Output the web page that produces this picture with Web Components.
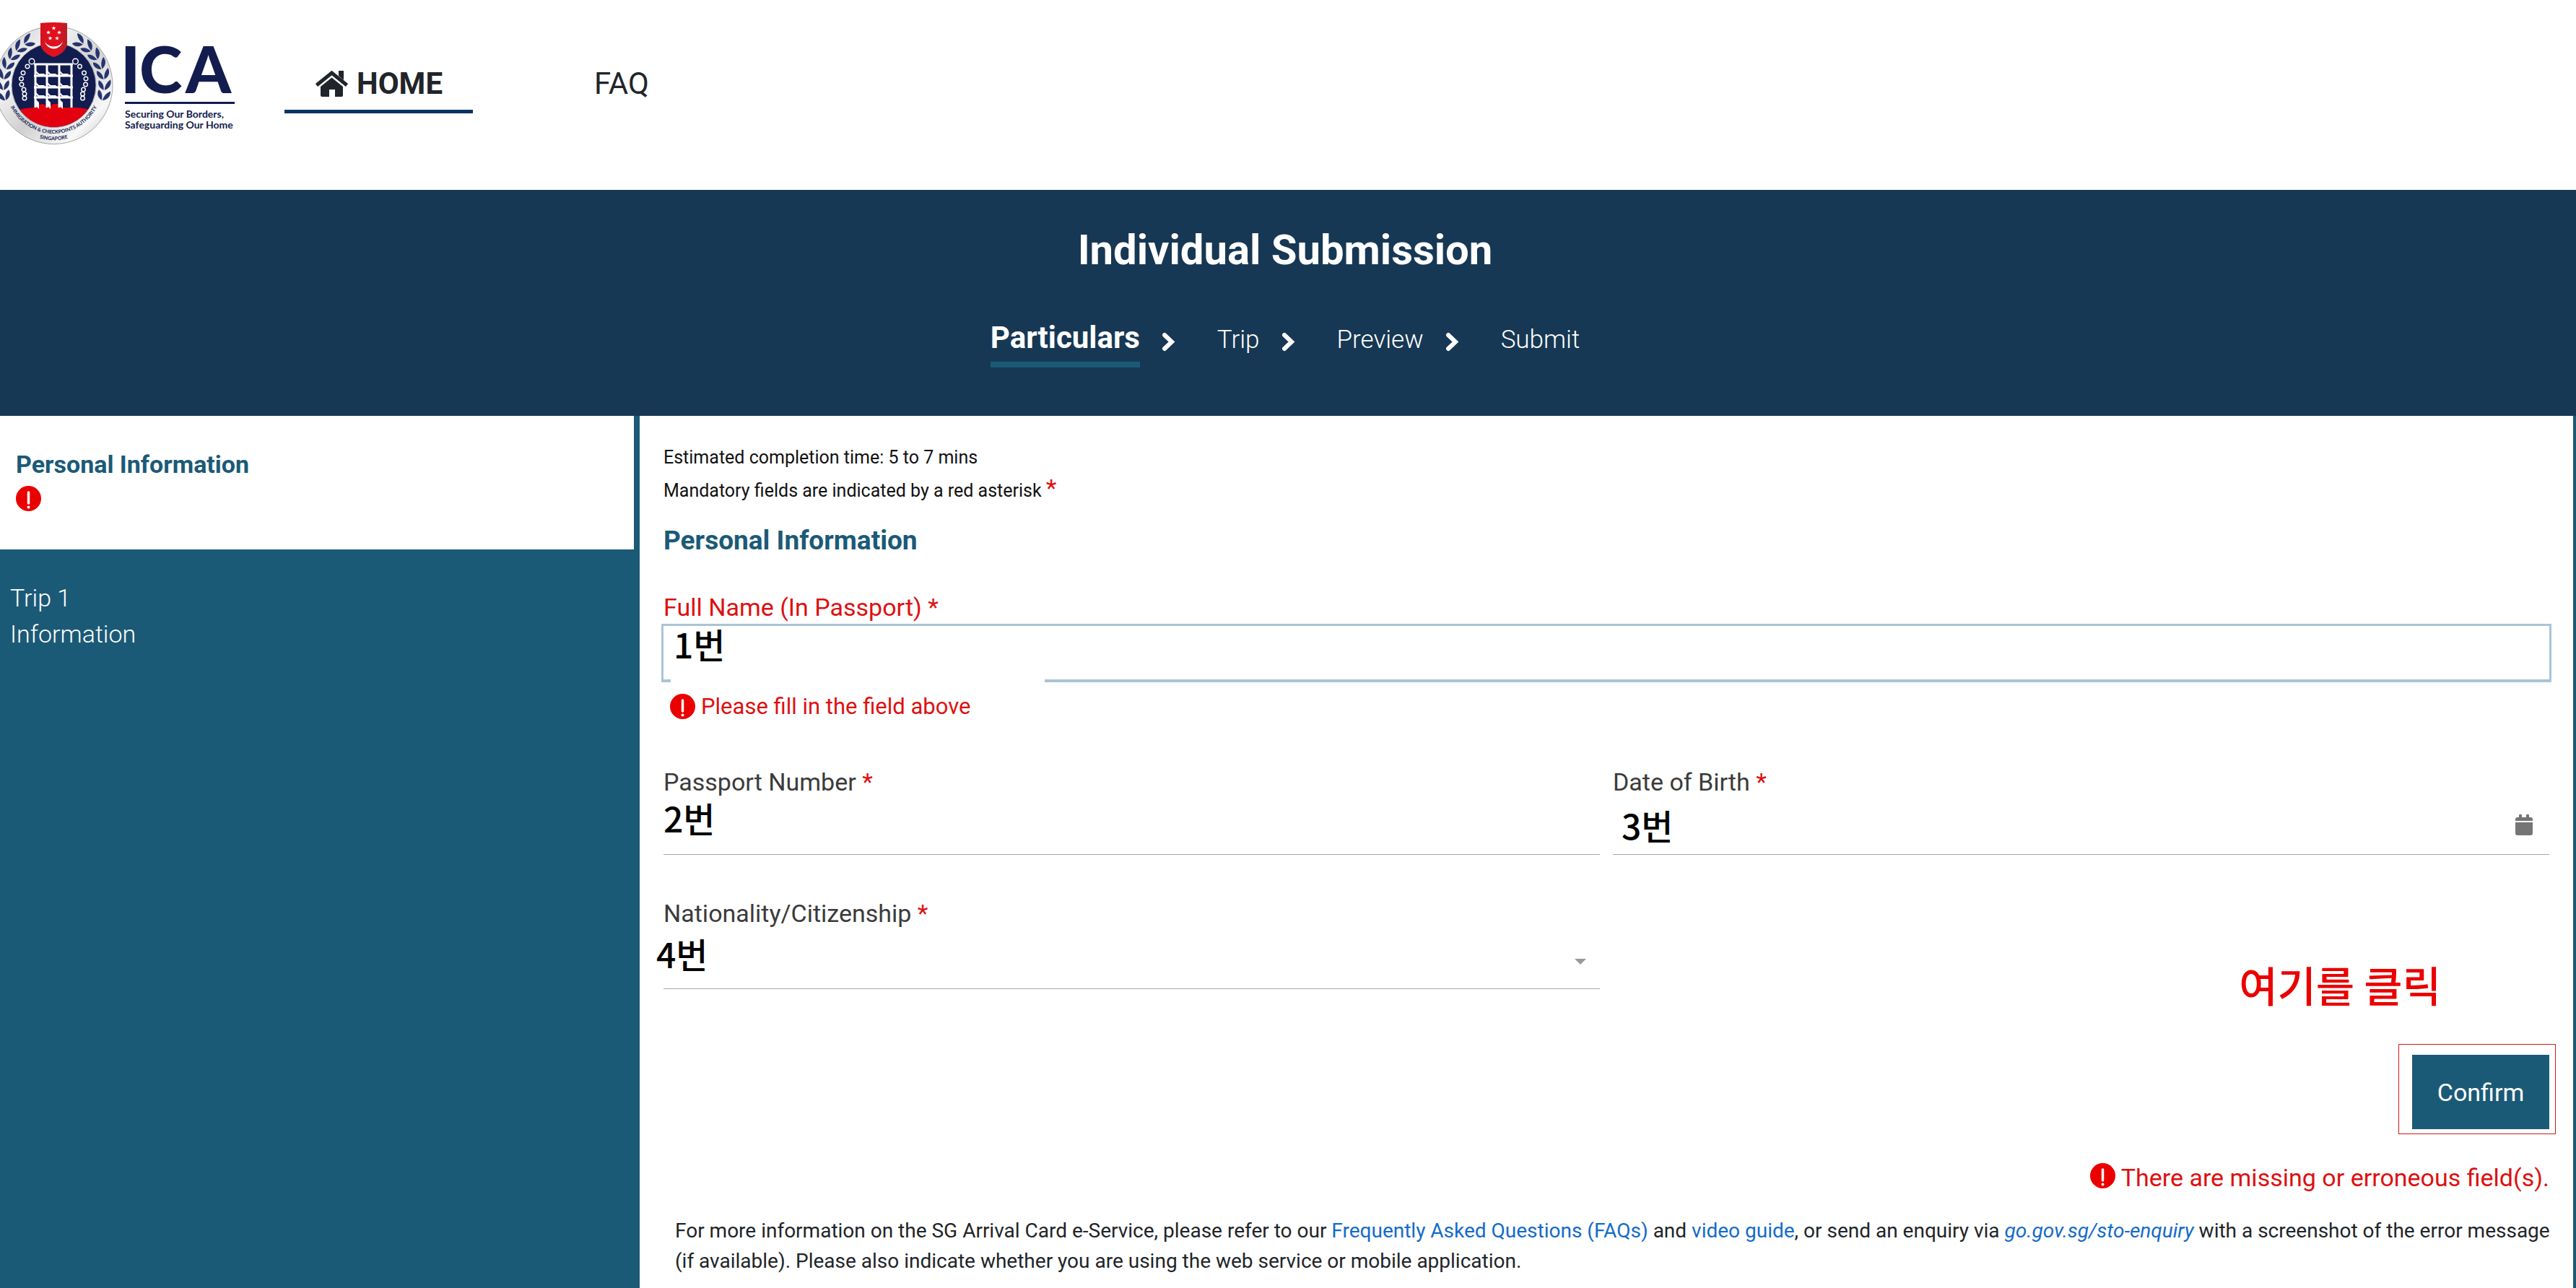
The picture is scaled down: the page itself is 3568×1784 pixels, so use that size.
<!DOCTYPE html>
<html lang="en">
<head>
<meta charset="utf-8">
<title>SG Arrival Card</title>
<style>
  body {
    margin: 0;
    min-height: 100vh;
    display: flex;
    flex-direction: column;
    background: #fff;
    color: #212529;
    font-family: Roboto, "Noto Sans CJK KR", sans-serif;
    font-size: 34px;
    --navy: #173854;
    --teal: #1b5a77;
    --red: #dd1111;
    --label-line: 46px;
  }
</style>
</head>
<body>
  <app-header></app-header>
  <step-banner title="Individual Submission" steps="Particulars,Trip,Preview,Submit"></step-banner>
  <app-shell>
    <side-nav slot="nav"></side-nav>
    <arrival-form></arrival-form>
  </app-shell>

<script>
const makeTemplate = (html) => {
  const template = document.createElement("template");
  template.innerHTML = html;
  return template;
};

class BaseElement extends HTMLElement {
  constructor() {
    super();
    this.attachShadow({ mode: "open" });
    this.shadowRoot.appendChild(this.constructor.template.content.cloneNode(true));
  }
}

/* ---------- logo ---------- */

// laurel branch on the right half of the ring, mirrored for the left
const laurel = () => {
  let out = "";
  for (let i = 0; i < 7; i++) {
    const deg = 15 - i * 12;
    const rad = (deg * Math.PI) / 180;
    const x = (70 * Math.cos(rad)).toFixed(1);
    const y = (70 * Math.sin(rad)).toFixed(1);
    out += `<g transform="translate(${x} ${y}) rotate(${deg})">
      <path d="M.6 3C.5-3 3-8 8-12C10-6 8 0 .6 3Z"/>
      <path d="M-.6 3C-.5-3-3-8-8-10C-10-5-7 1-.6 3Z"/></g>`;
  }
  return out;
};

const portcullis = () => {
  let out = "";
  for (const y of [89, 105, 121, 135]) out += `<path d="M47 ${y}H101" stroke-width="3"/>`;
  for (const x of [49, 65, 82, 99]) out += `<path d="M${x} 88V149" stroke-width="3"/>`;
  for (const y of [105, 121, 135]) {
    for (const x of [49, 65, 82]) {
      out += `<path d="M${x} ${y - 5}l5 5h10l-3-3h-7l-5-5z" fill="#fff" stroke="none"/>`;
    }
  }
  for (const x of [49, 65, 82]) out += `<path d="M${x} 137l5 5v9l-5-5z" fill="#fff" stroke="none"/>`;
  return out;
};

const chain = () =>
  [[44, 85], [38, 92], [32, 101], [29.5, 109], [30, 117], [33, 124], [34, 130], [34, 136]]
    .map(([x, y], i) => `<circle cx="${x}" cy="${y}" r="${i ? 2.8 : 3.8}"/>`).join("");

const star = (x, y) =>
  `<path transform="translate(${x} ${y})" d="M0-3L.8-.9 3-.9 1.2.5 1.8 2.6 0 1.3-1.8 2.6-1.2.5-3-.9-.8-.9Z"/>`;

class IcaLogo extends BaseElement {
  static template = makeTemplate(`
    <style>
      :host { display: block; }
      svg { display: block; }
      text { font-family: Lato, sans-serif; font-weight: 700; fill: #131c4e; }
    </style>
    <svg width="330" height="210" viewBox="0 0 330 210" role="img" aria-label="ICA">
      <defs>
        <linearGradient id="ring" x1="0" y1="0" x2="1" y2="1">
          <stop offset="0" stop-color="#c4c4c6"/><stop offset=".3" stop-color="#f4f4f4"/>
          <stop offset=".55" stop-color="#d0d0d2"/><stop offset=".8" stop-color="#f8f8f8"/>
          <stop offset="1" stop-color="#b5b5b8"/>
        </linearGradient>
        <linearGradient id="shield" x1="0" y1="0" x2="1" y2="0">
          <stop offset="0" stop-color="#d3131f"/><stop offset=".6" stop-color="#e5101e"/>
          <stop offset="1" stop-color="#b3202a"/>
        </linearGradient>
        <clipPath id="disc"><circle cx="74.5" cy="118" r="58"/></clipPath>
        <path id="arcOuter" d="M10.250 137A67 67 0 0 0 138.750 137"/>
        <path id="arcInner" d="M44 187.800A76 76 0 0 0 105 187.800"/>
      </defs>
      <circle cx="74.5" cy="118" r="81.500" fill="url(#ring)" stroke="#8e8e92" stroke-width=".8"/>
      <circle cx="74.5" cy="118" r="58.500" fill="#131c4e" stroke="#aeb0b8" stroke-width="1"/>
      <g fill="#27346e" transform="translate(74.500 118)">
        <g>${laurel()}</g><g transform="scale(-1 1)">${laurel()}</g>
      </g>
      <path clip-path="url(#disc)" fill="#e3000f" d="M14 156Q32 149 47 149L52 145 60 144 66 148 74 144 82 144 86 149 98 149Q118 148 136 156V180H14Z"/>
      <g fill="none" stroke="#fff">${portcullis()}</g>
      <g fill="none" stroke="#fff" stroke-width="1.400">
        ${chain()}<g transform="translate(148.500 0) scale(-1 1)">${chain()}</g>
      </g>
      <path d="M56 32Q74 30 93 32V60Q92 73 74.500 79Q57 73 56 60Z" fill="url(#shield)"/>
      <g fill="#fff">
        ${star(74.5, 39)}${star(67, 45)}${star(82, 45)}${star(69.500, 53)}${star(79, 53)}
        <path d="M62 55A12.500 12.500 0 0 0 87 55A12.500 9.500 0 0 1 62 55Z"/>
      </g>
      <text font-size="7"><textPath href="#arcOuter" startOffset="50%" text-anchor="middle">IMMIGRATION &amp; CHECKPOINTS AUTHORITY</textPath></text>
      <text font-size="7"><textPath href="#arcInner" startOffset="50%" text-anchor="middle">SINGAPORE</textPath></text>
      <text x="167 193 257" y="129" font-size="90" style="font-weight:900">ICA</text>
      <path d="M173 141H325V144H173Z" fill="#131c4e"/>
      <text x="173" y="163" font-size="14">Securing Our Borders,</text>
      <text x="173" y="178" font-size="14">Safeguarding Our Home</text>
    </svg>
  `);
}

/* ---------- header ---------- */

class AppHeader extends BaseElement {
  static template = makeTemplate(`
    <style>
      :host { display: block; }
      header {
        display: flex;
        align-items: flex-start;
        gap: 64px;
        padding-bottom: 53px;
      }
      nav {
        display: flex;
        gap: 126px;
        padding-top: 86px;
      }
      a {
        display: flex;
        align-items: center;
        gap: 11px;
        padding: 0 42px 6px;
        border-bottom: 5px solid transparent;
        color: #212529;
        font-size: 42px;
        line-height: 60px;
        text-decoration: none;
      }
      a.active {
        border-color: #073363;
        font-weight: 700;
      }
    </style>
    <header>
      <ica-logo></ica-logo>
      <nav>
        <a class="active" href="#home">
          <svg width="47" height="36" viewBox="0 0 47 36" fill="#212529">
            <path d="M33 0H40V13L33 7Z"/>
            <path d="M2.500 20L23.500 3L44.500 20" fill="none" stroke="#212529" stroke-width="5"/>
            <path d="M8 22L23.500 9.500L39 22V34Q39 36 37 36H28V26H20V36H10Q8 36 8 34Z"/>
          </svg>HOME
        </a>
        <a href="#faq">FAQ</a>
      </nav>
    </header>
  `);
}

class StepBanner extends BaseElement {
  static template = makeTemplate(`
    <style>
      :host {
        display: block;
        padding: 50px 8px 67px 0;
        background: var(--navy);
        color: #fff;
      }
      h1 {
        margin: 0 0 64px;
        font-size: 58px;
        font-weight: 700;
        line-height: 66px;
        text-align: center;
      }
      ol {
        display: flex;
        justify-content: center;
        align-items: baseline;
        margin: 0;
        padding: 0;
        list-style: none;
        font-size: 35px;
        font-weight: 300;
        line-height: 50px;
      }
      li[aria-current] {
        padding-bottom: 8px;
        border-bottom: 8px solid var(--teal);
        font-size: 42px;
        font-weight: 700;
      }
      li.arrow {
        align-self: flex-start;
        margin: 17px 58px 0 30px;
        line-height: 0;
      }
    </style>
    <h1></h1>
    <ol></ol>
  `);

  connectedCallback() {
    this.shadowRoot.querySelector("h1").textContent = this.getAttribute("title");
    const arrow = `<li class="arrow" aria-hidden="true"><svg width="19" height="27" viewBox="0 0 19 27">
      <path d="M4 4L14 13.500L4 23" fill="none" stroke="#fff" stroke-width="6" stroke-linecap="round"/></svg></li>`;
    this.shadowRoot.querySelector("ol").innerHTML = this.getAttribute("steps").split(",")
      .map((step, i) => `<li${i ? "" : ' aria-current="step"'}>${step}</li>`)
      .join(arrow);
  }
}

/* ---------- page body ---------- */

class AppShell extends BaseElement {
  static template = makeTemplate(`
    <style>
      :host {
        display: grid;
        grid-template-columns: calc(25% - 6px) 1fr;
        flex: 1;
      }
      main {
        padding: 35px 33px 16px;
        border-right: 4px solid var(--teal);
      }
    </style>
    <slot name="nav"></slot>
    <main><slot></slot></main>
  `);
}

class AlertIcon extends BaseElement {
  static template = makeTemplate(`
    <style>
      :host { display: block; line-height: 0; }
    </style>
    <svg width="35" height="35" viewBox="0 0 35 35">
      <circle cx="17.500" cy="17.500" r="17.500" fill="#eb0000"/>
      <path d="M17.500 9V24" stroke="#fff" stroke-width="3.500" stroke-linecap="round"/>
      <circle cx="17.500" cy="29.500" r="2" fill="#fff"/>
    </svg>
  `);
}

class SideNav extends BaseElement {
  static template = makeTemplate(`
    <style>
      :host {
        display: block;
        border-right: 8px solid var(--teal);
        background: var(--teal);
        line-height: 50px;
      }
      a {
        display: block;
        padding: 42px 14px;
        color: #fff;
        font-weight: 300;
        text-decoration: none;
      }
      a.active {
        padding: 42px 22px 53px;
        background: #fff;
        color: var(--teal);
        font-weight: 700;
      }
      alert-icon { margin-top: 5px; }
    </style>
    <nav>
      <a class="active" href="#personal">Personal Information<alert-icon></alert-icon></a>
      <a href="#trip">Trip 1<br>Information</a>
    </nav>
  `);
}

class ErrorText extends BaseElement {
  static template = makeTemplate(`
    <style>
      :host {
        display: flex;
        align-items: flex-start;
        gap: 8px;
        color: var(--red);
      }
    </style>
    <alert-icon></alert-icon>
    <span><slot></slot></span>
  `);
}

class FormField extends BaseElement {
  static template = makeTemplate(`
    <style>
      :host { display: block; position: relative; color: #3b3b3b; }
      :host([invalid]) { color: var(--red); }
      label { display: block; line-height: var(--label-line); }
      .star { color: var(--red); }
      .control { position: relative; }
      input, select {
        display: block;
        box-sizing: border-box;
        width: 100%;
        height: 78px;
        padding: 0 14px;
        border: 0;
        border-bottom: 1px solid #a8a8a8;
        border-radius: 0;
        outline: 0;
        background: transparent;
        color: #000;
        font: inherit;
        appearance: none;
      }
      select { height: 82px; }
      :host([invalid]) .control { margin: 0 -3px; }
      :host([invalid]) input {
        height: 81px;
        border: 3px solid #a9c4d6;
        border-bottom-width: 4px;
      }
      /* blank strip over the lower edge of the focused box */
      :host([invalid]) .control::after {
        content: "";
        position: absolute;
        left: 13px;
        bottom: 0;
        width: 518px;
        height: 4px;
        background: #fff;
      }
      svg { position: absolute; pointer-events: none; }
      .calendar { right: 23px; top: 22px; }
      .caret { right: 19px; top: 40px; }
    </style>
    <label for="control"><span class="text"></span> <span class="star">*</span></label>
    <div class="control"></div>
    <slot></slot>
  `);

  connectedCallback() {
    const root = this.shadowRoot;
    const type = this.getAttribute("type");
    root.querySelector(".text").textContent = this.getAttribute("label");
    root.querySelector(".control").innerHTML = type === "select"
      ? `<select id="control"><option></option></select>
         <svg class="caret" width="16" height="8"><path d="M0 0H16L8 8Z" fill="#999"/></svg>`
      : `<input id="control" type="text">`;
    if (type === "date") {
      root.querySelector(".control").innerHTML += `
        <svg class="calendar" width="24" height="29" viewBox="0 0 24 29" fill="#757575">
          <path d="M5 4V1Q5 0 6 0H8Q9 0 9 1V4H15V1Q15 0 16 0H18Q19 0 19 1V4H21Q24 4 24 7V9H0V7Q0 4 3 4Z"/>
          <path d="M0 11H24V26Q24 29 21 29H3Q0 29 0 26Z"/>
        </svg>`;
    }
  }
}

// hand-placed marker lying over the form
class NoteMark extends BaseElement {
  static template = makeTemplate(`
    <style>
      :host {
        position: absolute;
        color: #000;
        font-family: "Noto Sans CJK KR", sans-serif;
        font-size: 48px;
        font-weight: 500;
        line-height: 50px;
        white-space: nowrap;
        pointer-events: none;
      }
      :host([call]) { color: #eb0000; font-size: 58px; }
    </style>
    <slot></slot>
  `);
}

class ArrivalForm extends BaseElement {
  static template = makeTemplate(`
    <style>
      :host { display: block; }
      p { margin: 0; }
      .intro { color: #111; font-size: 25px; line-height: 46px; }
      .intro span { color: var(--red); font-size: 34px; line-height: 0; }
      h2 {
        margin: 21px 0 44px;
        color: var(--teal);
        font-size: 37px;
        font-weight: 700;
        line-height: 50px;
      }
      .fields {
        display: grid;
        grid-template-columns: 1fr 1fr;
        gap: 58px 18px;
        margin-top: 64px;
      }
      form > form-field error-text {
        margin: 16px 0 0 9px;
        font-size: 31px;
        line-height: 35px;
      }
      .actions {
        display: flex;
        flex-direction: column;
        align-items: flex-end;
        margin-top: 91px;
      }
      .actions error-text { margin-top: 47px; line-height: 40px; }
      .confirm { position: relative; }
      /* thin red frame drawn round the button */
      .confirm::after {
        content: "";
        position: absolute;
        inset: -15px -9px -7px -19px;
        border: 1px solid #d01c1c;
        pointer-events: none;
      }
      button {
        display: block;
        width: 190px;
        height: 103px;
        padding: 0;
        border: 0;
        background: var(--teal);
        color: #fff;
        font: inherit;
      }
      .help {
        margin: 33px -16px 0 0;
        padding-left: 16px;
        font-size: 28px;
        line-height: 42px;
      }
      a { color: #136bc9; text-decoration: none; }
    </style>
    <p class="intro">Estimated completion time: 5 to 7 mins</p>
    <p class="intro">Mandatory fields are indicated by a red asterisk <span>*</span></p>
    <form>
      <h2>Personal Information</h2>
      <form-field label="Full Name (In Passport)" invalid>
        <note-mark style="left: 14px; top: 48px">1번</note-mark>
        <error-text>Please fill in the field above</error-text>
      </form-field>
      <div class="fields">
        <form-field label="Passport Number">
          <note-mark style="left: 0; top: 47px">2번</note-mark>
        </form-field>
        <form-field label="Date of Birth" type="date">
          <note-mark style="left: 12px; top: 57px">3번</note-mark>
        </form-field>
        <form-field label="Nationality/Citizenship" type="select">
          <note-mark style="left: -10px; top: 53px">4번</note-mark>
        </form-field>
      </div>
      <div class="actions">
        <div class="confirm">
          <note-mark call style="right: 150px; bottom: 176px">여기를 클릭</note-mark>
          <button type="button">Confirm</button>
        </div>
        <error-text>There are missing or erroneous field(s).</error-text>
      </div>
    </form>
    <p class="help">For more information on the SG Arrival Card e-Service, please refer to our
      <a href="#faq">Frequently Asked Questions (FAQs)</a> and <a href="#guide">video guide</a>, or send an
      enquiry via <a href="#enquiry"><i>go.gov.sg/sto-enquiry</i></a> with a screenshot of the error message
      (if available). Please also indicate whether you are using the web service or mobile application.</p>
  `);
}

customElements.define("ica-logo", IcaLogo);
customElements.define("app-header", AppHeader);
customElements.define("step-banner", StepBanner);
customElements.define("app-shell", AppShell);
customElements.define("alert-icon", AlertIcon);
customElements.define("side-nav", SideNav);
customElements.define("error-text", ErrorText);
customElements.define("form-field", FormField);
customElements.define("note-mark", NoteMark);
customElements.define("arrival-form", ArrivalForm);
</script>
</body>
</html>
